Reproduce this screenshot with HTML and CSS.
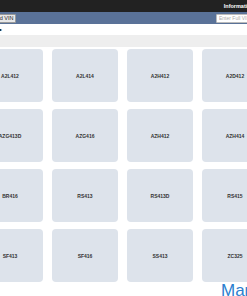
FILE: index.html
```html
<!DOCTYPE html>
<html lang="en">
<head>
    <meta charset="UTF-8">
    <meta name="viewport" content="width=device-width, initial-scale=1.0">
    <title>Models</title>
    <link rel="stylesheet" href="styles.css">
</head>
<body>
    <div class="page">
        <div class="topbar">
            <span class="topbar-link">Information</span>
        </div>
        <div class="toolbar">
            <button class="vin-btn">Find VIN</button>
            <input type="text" class="vin-input" placeholder="Enter Full VIN">
        </div>
        <div class="crumbs"><span class="arrow">&#9654;</span></div>
        <div class="band"></div>

        <div class="grid">
            <div class="card">A2L412</div>
            <div class="card">A2L414</div>
            <div class="card">A2H412</div>
            <div class="card">A2D412</div>
            <div class="card">AZG413D</div>
            <div class="card">AZG416</div>
            <div class="card">AZH412</div>
            <div class="card">AZH414</div>
            <div class="card">BR416</div>
            <div class="card">RS413</div>
            <div class="card">RS413D</div>
            <div class="card">RS415</div>
            <div class="card">SF413</div>
            <div class="card">SF416</div>
            <div class="card">SS413</div>
            <div class="card">ZC325</div>
        </div>

        <h2 class="section-title">Manufacturers</h2>
    </div>
</body>
</html>
```

FILE: styles.css
```css
body {
    font-family: "Liberation Sans", Arial, sans-serif;
    margin: 0;
    overflow: hidden;
    background-color: #fff;
}
.page {
    width: 300px;
    margin-left: -23px;
}
.topbar {
    height: 12px;
    background-color: #222;
    display: flex;
    justify-content: flex-end;
    align-items: center;
    padding-right: 23px;
}
.topbar-link {
    color: #fff;
    font-size: 5.5px;
    font-weight: bold;
}
.toolbar {
    height: 12px;
    background-color: #5a7298;
    display: flex;
    justify-content: space-between;
    align-items: center;
    padding: 0 11px 0 12px;
}
.vin-btn {
    height: 9px;
    padding: 0 2px;
    font-family: inherit;
    font-size: 5.5px;
    color: #222;
    background-color: #e8e8e8;
    border: 1px solid #999;
    border-radius: 1px;
}
.vin-input {
    width: 50px;
    height: 9px;
    box-sizing: border-box;
    padding: 0 2px;
    font-family: inherit;
    font-size: 5px;
    border: 1px solid #bbb;
    border-radius: 1px;
}
.vin-input::placeholder {
    color: #aaa;
}
.crumbs {
    height: 11px;
    display: flex;
    align-items: center;
    padding-left: 22px;
}
.arrow {
    font-size: 4px;
    color: #000;
}
.band {
    height: 12px;
    background-color: #eee;
}
.grid {
    display: grid;
    grid-template-columns: repeat(4, 66px);
    grid-auto-rows: 53px;
    column-gap: 9px;
    row-gap: 7px;
    padding-top: 2px;
}
.card {
    background-color: #dde3eb;
    border-radius: 4px;
    display: flex;
    align-items: center;
    justify-content: center;
    font-size: 5px;
    font-weight: bold;
    color: #333;
}
.section-title {
    margin: 0;
    padding-left: 244px;
    font-size: 17px;
    font-weight: normal;
    line-height: 1;
    color: #2b80cf;
    white-space: nowrap;
}
```
